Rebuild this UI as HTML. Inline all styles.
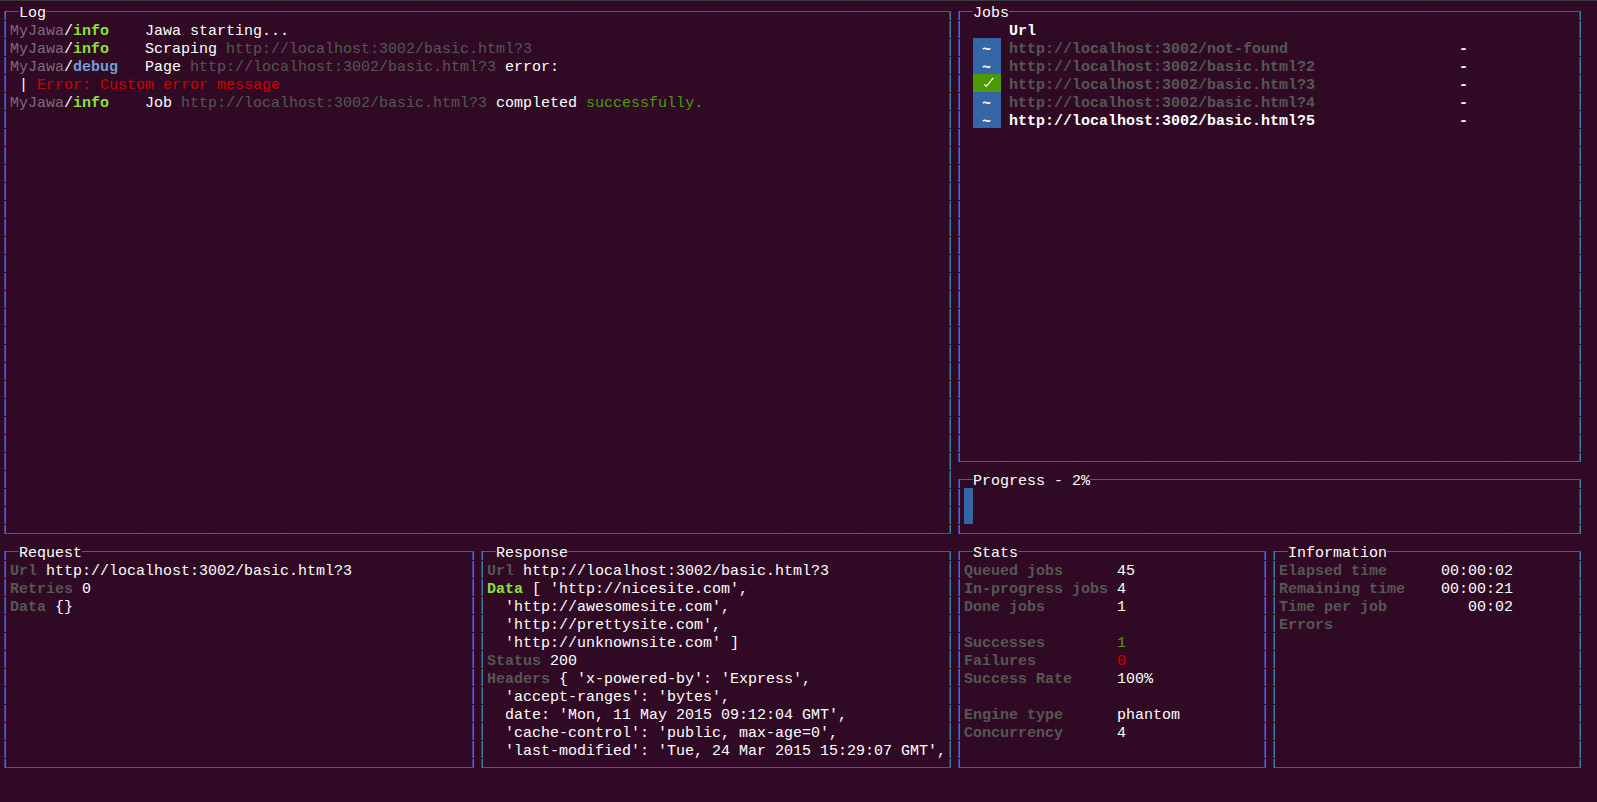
<!DOCTYPE html>
<html><head><meta charset="utf-8"><title>Jawa</title><style>
html,body{margin:0;padding:0;}
body{width:1597px;height:802px;background:#300a24;overflow:hidden;position:relative;}
.top{position:absolute;left:0;top:0;width:1597px;height:1px;background:#3c3b37;}
.h{position:absolute;height:1px;background-image:repeating-linear-gradient(to right,#3465a4 0 8px,#344c70 8px 9px);background-repeat:repeat-x;}
.v{position:absolute;width:2px;background-image:linear-gradient(to bottom,transparent 0 17px,#300a24 17px 18px),linear-gradient(to right,#3a3a9c 0 1px,#3a7ca4 1px 2px);background-size:2px 18px,2px 100%;background-repeat:repeat-y,no-repeat;}
.badge{position:absolute;}
.t{position:absolute;font-family:"Liberation Mono",monospace;font-size:15px;line-height:18px;white-space:pre;color:#ffffff;}
.g{color:#555753;}
.gb{color:#555753;font-weight:bold;-webkit-text-stroke:0;}
.b{font-weight:bold;-webkit-text-stroke:0;}
.dm{color:#7d6b7b;}
.bg{color:#8ae234;font-weight:bold;-webkit-text-stroke:0;}
.bb{color:#729fcf;font-weight:bold;-webkit-text-stroke:0;}
.r{color:#cc0000;}
.gr{color:#4e9a06;}
</style></head>
<body><div class="top"></div>
<div class="h" style="left:4px;top:11px;width:15px;background-position:6px 0"></div>
<div class="h" style="left:46px;top:11px;width:905px;background-position:0px 0"></div>
<div class="h" style="left:4px;top:533px;width:947px;background-position:6px 0"></div>
<div class="v" style="left:4px;top:11px;height:523px;background-position:0 10px,0 0"></div>
<div class="v" style="left:949px;top:11px;height:523px;background-position:0 10px,0 0"></div>
<div class="h" style="left:958px;top:11px;width:15px;background-position:6px 0"></div>
<div class="h" style="left:1009px;top:11px;width:572px;background-position:0px 0"></div>
<div class="h" style="left:958px;top:461px;width:623px;background-position:6px 0"></div>
<div class="v" style="left:958px;top:11px;height:451px;background-position:0 10px,0 0"></div>
<div class="v" style="left:1579px;top:11px;height:451px;background-position:0 10px,0 0"></div>
<div class="h" style="left:958px;top:479px;width:15px;background-position:6px 0"></div>
<div class="h" style="left:1090px;top:479px;width:491px;background-position:0px 0"></div>
<div class="h" style="left:958px;top:533px;width:623px;background-position:6px 0"></div>
<div class="v" style="left:958px;top:479px;height:55px;background-position:0 10px,0 0"></div>
<div class="v" style="left:1579px;top:479px;height:55px;background-position:0 10px,0 0"></div>
<div class="h" style="left:4px;top:551px;width:15px;background-position:6px 0"></div>
<div class="h" style="left:82px;top:551px;width:392px;background-position:0px 0"></div>
<div class="h" style="left:4px;top:767px;width:470px;background-position:6px 0"></div>
<div class="v" style="left:4px;top:551px;height:217px;background-position:0 10px,0 0"></div>
<div class="v" style="left:472px;top:551px;height:217px;background-position:0 10px,0 0"></div>
<div class="h" style="left:481px;top:551px;width:15px;background-position:6px 0"></div>
<div class="h" style="left:568px;top:551px;width:383px;background-position:0px 0"></div>
<div class="h" style="left:481px;top:767px;width:470px;background-position:6px 0"></div>
<div class="v" style="left:481px;top:551px;height:217px;background-position:0 10px,0 0"></div>
<div class="v" style="left:949px;top:551px;height:217px;background-position:0 10px,0 0"></div>
<div class="h" style="left:958px;top:551px;width:15px;background-position:6px 0"></div>
<div class="h" style="left:1018px;top:551px;width:248px;background-position:0px 0"></div>
<div class="h" style="left:958px;top:767px;width:308px;background-position:6px 0"></div>
<div class="v" style="left:958px;top:551px;height:217px;background-position:0 10px,0 0"></div>
<div class="v" style="left:1264px;top:551px;height:217px;background-position:0 10px,0 0"></div>
<div class="h" style="left:1273px;top:551px;width:15px;background-position:6px 0"></div>
<div class="h" style="left:1387px;top:551px;width:194px;background-position:0px 0"></div>
<div class="h" style="left:1273px;top:767px;width:308px;background-position:6px 0"></div>
<div class="v" style="left:1273px;top:551px;height:217px;background-position:0 10px,0 0"></div>
<div class="v" style="left:1579px;top:551px;height:217px;background-position:0 10px,0 0"></div>
<div class="t" style="left:19px;top:5px">Log</div>
<div class="t" style="left:973px;top:5px">Jobs</div>
<div class="t" style="left:973px;top:473px">Progress - 2%</div>
<div class="t" style="left:19px;top:545px">Request</div>
<div class="t" style="left:496px;top:545px">Response</div>
<div class="t" style="left:973px;top:545px">Stats</div>
<div class="t" style="left:1288px;top:545px">Information</div>
<div class="t" style="left:10px;top:23px"><span class="dm">MyJawa</span>/<span class="bg">info</span></div>
<div class="t" style="left:145px;top:23px">Jawa starting...</div>
<div class="t" style="left:10px;top:41px"><span class="dm">MyJawa</span>/<span class="bg">info</span></div>
<div class="t" style="left:145px;top:41px">Scraping <span class="g">http://localhost:3002/basic.html?3</span></div>
<div class="t" style="left:10px;top:59px"><span class="dm">MyJawa</span>/<span class="bb">debug</span></div>
<div class="t" style="left:145px;top:59px">Page <span class="g">http://localhost:3002/basic.html?3</span> error:</div>
<div class="t" style="left:19px;top:77px">| <span class="r">Error: Custom error message</span></div>
<div class="t" style="left:10px;top:95px"><span class="dm">MyJawa</span>/<span class="bg">info</span></div>
<div class="t" style="left:145px;top:95px">Job <span class="g">http://localhost:3002/basic.html?3</span> completed <span class="gr">successfully.</span></div>
<div class="t" style="left:1009px;top:23px"><span class="b">Url</span></div>
<div class="badge" style="left:973px;top:38px;width:28px;height:18px;background:#3465a4"></div>
<div class="t" style="left:982px;top:42px"><span class="b">~</span></div>
<div class="t" style="left:1009px;top:41px"><span class="gb">http://localhost:3002/not-found</span></div>
<div class="t" style="left:1459px;top:41px"><span class="b">-</span></div>
<div class="badge" style="left:973px;top:56px;width:28px;height:18px;background:#3465a4"></div>
<div class="t" style="left:982px;top:60px"><span class="b">~</span></div>
<div class="t" style="left:1009px;top:59px"><span class="gb">http://localhost:3002/basic.html?2</span></div>
<div class="t" style="left:1459px;top:59px"><span class="b">-</span></div>
<div class="badge" style="left:973px;top:74px;width:28px;height:18px;background:#4e9a06"></div>
<svg style="position:absolute;left:980px;top:74px" width="18" height="18" viewBox="0 0 18 18"><path d="M4.5 10.6 L6.3 12.4 L13 4.3" fill="none" stroke="#fff" stroke-width="1.25" stroke-linecap="round" stroke-linejoin="round"/></svg>
<div class="t" style="left:1009px;top:77px"><span class="gb">http://localhost:3002/basic.html?3</span></div>
<div class="t" style="left:1459px;top:77px"><span class="b">-</span></div>
<div class="badge" style="left:973px;top:92px;width:28px;height:18px;background:#3465a4"></div>
<div class="t" style="left:982px;top:96px"><span class="b">~</span></div>
<div class="t" style="left:1009px;top:95px"><span class="gb">http://localhost:3002/basic.html?4</span></div>
<div class="t" style="left:1459px;top:95px"><span class="b">-</span></div>
<div class="badge" style="left:973px;top:110px;width:28px;height:18px;background:#3465a4"></div>
<div class="t" style="left:982px;top:114px"><span class="b">~</span></div>
<div class="t" style="left:1009px;top:113px"><span class="b">http://localhost:3002/basic.html?5</span></div>
<div class="t" style="left:1459px;top:113px"><span class="b">-</span></div>
<div class="badge" style="left:964px;top:488px;width:9px;height:36px;background:#3465a4"></div>
<div class="t" style="left:10px;top:563px"><span class="gb">Url</span> http://localhost:3002/basic.html?3</div>
<div class="t" style="left:10px;top:581px"><span class="gb">Retries</span> 0</div>
<div class="t" style="left:10px;top:599px"><span class="gb">Data</span> {}</div>
<div class="t" style="left:487px;top:563px"><span class="gb">Url</span> http://localhost:3002/basic.html?3</div>
<div class="t" style="left:487px;top:581px"><span class="bg">Data</span> [ &#x27;http://nicesite.com&#x27;,</div>
<div class="t" style="left:487px;top:599px">  &#x27;http://awesomesite.com&#x27;,</div>
<div class="t" style="left:487px;top:617px">  &#x27;http://prettysite.com&#x27;,</div>
<div class="t" style="left:487px;top:635px">  &#x27;http://unknownsite.com&#x27; ]</div>
<div class="t" style="left:487px;top:653px"><span class="gb">Status</span> 200</div>
<div class="t" style="left:487px;top:671px"><span class="gb">Headers</span> { &#x27;x-powered-by&#x27;: &#x27;Express&#x27;,</div>
<div class="t" style="left:487px;top:689px">  &#x27;accept-ranges&#x27;: &#x27;bytes&#x27;,</div>
<div class="t" style="left:487px;top:707px">  date: &#x27;Mon, 11 May 2015 09:12:04 GMT&#x27;,</div>
<div class="t" style="left:487px;top:725px">  &#x27;cache-control&#x27;: &#x27;public, max-age=0&#x27;,</div>
<div class="t" style="left:487px;top:743px">  &#x27;last-modified&#x27;: &#x27;Tue, 24 Mar 2015 15:29:07 GMT&#x27;,</div>
<div class="t" style="left:964px;top:563px"><span class="gb">Queued jobs</span></div>
<div class="t" style="left:1117px;top:563px">45</div>
<div class="t" style="left:964px;top:581px"><span class="gb">In-progress jobs</span></div>
<div class="t" style="left:1117px;top:581px">4</div>
<div class="t" style="left:964px;top:599px"><span class="gb">Done jobs</span></div>
<div class="t" style="left:1117px;top:599px">1</div>
<div class="t" style="left:964px;top:635px"><span class="gb">Successes</span></div>
<div class="t" style="left:1117px;top:635px"><span class="gr">1</span></div>
<div class="t" style="left:964px;top:653px"><span class="gb">Failures</span></div>
<div class="t" style="left:1117px;top:653px"><span class="r">0</span></div>
<div class="t" style="left:964px;top:671px"><span class="gb">Success Rate</span></div>
<div class="t" style="left:1117px;top:671px">100%</div>
<div class="t" style="left:964px;top:707px"><span class="gb">Engine type</span></div>
<div class="t" style="left:1117px;top:707px">phantom</div>
<div class="t" style="left:964px;top:725px"><span class="gb">Concurrency</span></div>
<div class="t" style="left:1117px;top:725px">4</div>
<div class="t" style="left:1279px;top:563px"><span class="gb">Elapsed time</span></div>
<div class="t" style="left:1441px;top:563px">00:00:02</div>
<div class="t" style="left:1279px;top:581px"><span class="gb">Remaining time</span></div>
<div class="t" style="left:1441px;top:581px">00:00:21</div>
<div class="t" style="left:1279px;top:599px"><span class="gb">Time per job</span></div>
<div class="t" style="left:1441px;top:599px">   00:02</div>
<div class="t" style="left:1279px;top:617px"><span class="gb">Errors</span></div>
</body></html>
